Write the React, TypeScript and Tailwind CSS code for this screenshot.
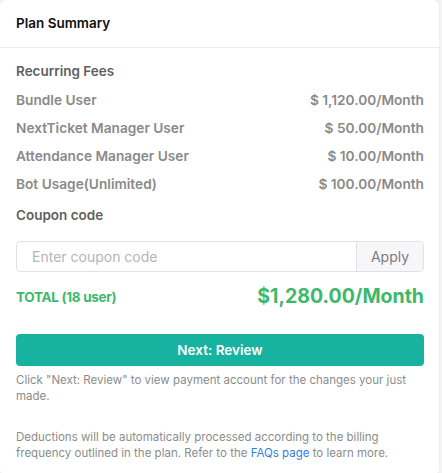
import React from "react";

const fees = [
  { label: "Bundle User", value: "$ 1,120.00/Month" },
  { label: "NextTicket Manager User", value: "$ 50.00/Month" },
  { label: "Attendance Manager User", value: "$ 10.00/Month" },
  { label: "Bot Usage(Unlimited)", value: "$ 100.00/Month" },
];

export default function App() {
  return (
    <div
      className="min-h-[473px] w-[442px] bg-[#f4f4f5]"
      style={{ fontFamily: "Inter, 'Noto Sans', sans-serif" }}
    >
      <div className="w-[439px] rounded-md bg-white shadow-[0_0_2px_rgba(0,0,0,0.08)]">
        <div className="flex h-[48px] items-center border-b border-[#ececec] px-4">
          <h2 className="text-[13.5px] font-semibold text-[#111]">Plan Summary</h2>
        </div>

        <div className="pl-4 pr-[15px] pb-[14px] pt-[14px]">
          <h3 className="text-[13.5px] font-semibold leading-[18px] text-[#5f5f5f]">
            Recurring Fees
          </h3>
          <div className="mt-[6px] flex flex-col">
            {fees.map((fee) => (
              <div
                key={fee.label}
                className="flex h-[28px] items-center justify-between text-[13.7px] font-semibold text-[#8a8a8a]"
              >
                <span>{fee.label}</span>
                <span>{fee.value}</span>
              </div>
            ))}
          </div>

          <h3 className="mt-[8px] text-[13.5px] font-semibold leading-[18px] text-[#5f5f5f]">
            Coupon code
          </h3>

          <div className="mt-[17px] flex h-[31px] overflow-hidden rounded border border-[#e2e2e6]">
            <input
              className="min-w-0 flex-1 px-[15px] text-[14px] text-[#333] outline-none placeholder:text-[#b5b5b9]"
              placeholder="Enter coupon code"
            />
            <button className="w-[67px] border-l border-[#e2e2e6] bg-[#f7f7f9] text-[14px] text-[#7b7b80]">
              Apply
            </button>
          </div>

          <div className="mt-[10px] flex items-center justify-between">
            <span className="text-[13.5px] font-bold tracking-[-0.3px] text-[#3cb96b]">
              TOTAL (18 user)
            </span>
            <span className="text-[19.5px] font-bold text-[#3cb96b]">$1,280.00/Month</span>
          </div>

          <button className="mt-[23px] flex h-[32px] w-full items-center justify-center rounded bg-[#17b3a0] text-[13.5px] font-semibold text-white">
            Next: Review
          </button>

          <p className="mt-[6px] text-[11.5px] leading-[16px] text-[#8c8c8c]">
            Click "Next: Review" to view payment account for the changes your just made.
          </p>

          <p className="mt-[25px] text-[11.5px] leading-[16px] text-[#8c8c8c]">
            Deductions will be automatically processed according to the billing frequency
            outlined in the plan. Refer to the{" "}
            <a href="#" className="text-[#2f7fe0]">
              FAQs page
            </a>{" "}
            to learn more.
          </p>
        </div>
      </div>
    </div>
  );
}
